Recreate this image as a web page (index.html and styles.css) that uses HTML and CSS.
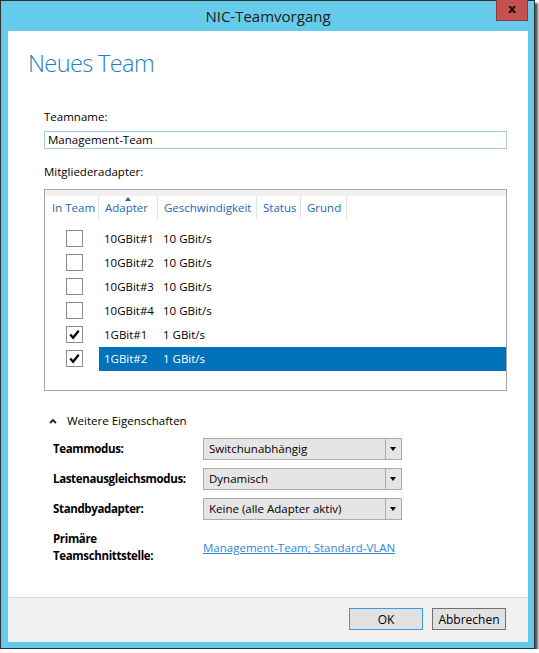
FILE: index.html
```html
<!DOCTYPE html>
<html lang="de">
<head>
    <meta charset="UTF-8">
    <title>NIC-Teamvorgang</title>
    <link rel="stylesheet" href="styles.css">
</head>
<body>
    <div class="window">
        <div class="titlebar">
            <span class="title">NIC-Teamvorgang</span>
            <div class="close">x</div>
        </div>
        <div class="content">
            <div class="main">
                <h1>Neues Team</h1>
                <div class="form">
                    <div class="field-label">Teamname:</div>
                    <div class="text-input">Management-Team</div>

                    <div class="field-label list-label">Mitgliederadapter:</div>
                    <div class="listbox">
                        <div class="list-top"></div>
                        <div class="list-header">
                            <div class="col col-team">In Team</div>
                            <div class="col col-adapter"><span class="sort-arrow"></span>Adapter</div>
                            <div class="col col-speed">Geschwindigkeit</div>
                            <div class="col col-status">Status</div>
                            <div class="col col-reason">Grund</div>
                        </div>
                        <div class="list-rows">
                            <div class="row">
                                <div class="check-cell"><span class="check"></span></div>
                                <div class="data"><span class="cell-adapter">10GBit#1</span><span>10 GBit/s</span></div>
                            </div>
                            <div class="row">
                                <div class="check-cell"><span class="check"></span></div>
                                <div class="data"><span class="cell-adapter">10GBit#2</span><span>10 GBit/s</span></div>
                            </div>
                            <div class="row">
                                <div class="check-cell"><span class="check"></span></div>
                                <div class="data"><span class="cell-adapter">10GBit#3</span><span>10 GBit/s</span></div>
                            </div>
                            <div class="row">
                                <div class="check-cell"><span class="check"></span></div>
                                <div class="data"><span class="cell-adapter">10GBit#4</span><span>10 GBit/s</span></div>
                            </div>
                            <div class="row">
                                <div class="check-cell"><span class="check checked"><svg viewBox="0 0 16 16"><path d="M3.5 8 L6.5 11.5 L12.5 4"/></svg></span></div>
                                <div class="data"><span class="cell-adapter">1GBit#1</span><span>1 GBit/s</span></div>
                            </div>
                            <div class="row selected">
                                <div class="check-cell"><span class="check checked"><svg viewBox="0 0 16 16"><path d="M3.5 8 L6.5 11.5 L12.5 4"/></svg></span></div>
                                <div class="data"><span class="cell-adapter">1GBit#2</span><span>1 GBit/s</span></div>
                            </div>
                        </div>
                    </div>

                    <div class="expander">
                        <svg class="chevron" viewBox="0 0 8 6"><path d="M1 5 L4 2 L7 5"/></svg>
                        <span>Weitere Eigenschaften</span>
                    </div>

                    <div class="props">
                        <div class="prop-label">Teammodus:</div>
                        <div class="select">Switchunabhängig<span class="select-arrow"></span></div>

                        <div class="prop-label">Lastenausgleichsmodus:</div>
                        <div class="select">Dynamisch<span class="select-arrow"></span></div>

                        <div class="prop-label">Standbyadapter:</div>
                        <div class="select">Keine (alle Adapter aktiv)<span class="select-arrow"></span></div>

                        <div class="prop-label last">Primäre<br>Teamschnittstelle:</div>
                        <a class="link last" href="#">Management-Team; Standard-VLAN</a>
                    </div>
                </div>
            </div>
            <div class="footer">
                <button class="btn btn-default">OK</button>
                <button class="btn">Abbrechen</button>
            </div>
        </div>
    </div>
</body>
</html>
```

FILE: styles.css
```css
/* Page */
body {
    margin: 0;
    background: #fff;
    font-family: "Segoe UI", "Open Sans", sans-serif;
    font-size: 11.5px;
    color: #000;
}

/* Window frame */
.window {
    width: 535px;
    height: 649px;
    box-sizing: border-box;
    border: 1px solid #2e2e2e;
    background: #66cbea;
    padding: 0 6px 6px 7px;
    display: flex;
    flex-direction: column;
    box-shadow: 3px 3px 2px rgba(0, 0, 0, 0.65);
}

.titlebar {
    position: relative;
    height: 30px;
    line-height: 30px;
    text-align: center;
    font-size: 15px;
    color: #1b1b1b;
}

.close {
    position: absolute;
    top: -1px;
    right: 0;
    width: 32px;
    height: 21px;
    box-sizing: border-box;
    background: #c75050;
    border: 1px solid #8c3b37;
    border-top: none;
    color: #111;
    font-family: "DejaVu Sans", sans-serif;
    font-weight: bold;
    font-size: 13px;
    line-height: 17px;
}

.content {
    flex: 1;
    display: flex;
    flex-direction: column;
    background: #fff;
}

.main {
    flex: 1;
    padding-right: 21px;
}

h1 {
    margin: 0;
    padding: 16px 0 0 20px;
    font-size: 23.5px;
    font-weight: 300;
    letter-spacing: -0.6px;
    line-height: 33px;
    color: #1d80c3;
}

/* Form */
.form {
    padding-left: 36px;
}

.field-label {
    line-height: 16px;
    margin-top: 29px;
}

.list-label {
    margin-top: 15px;
}

.text-input {
    height: 18px;
    box-sizing: border-box;
    margin-top: 6px;
    border: 1px solid #a8c9e6;
    padding: 0 3px;
    line-height: 16px;
}

/* Adapter list */
.listbox {
    margin-top: 9px;
    height: 202px;
    box-sizing: border-box;
    border: 1px solid #a7a7a7;
}

.list-top {
    height: 6px;
    background: #f0f0f0;
}

.list-header {
    display: flex;
    height: 23px;
    line-height: 23px;
    color: #2467b0;
}

.col {
    position: relative;
    box-sizing: border-box;
    padding-left: 6px;
    border-right: 1px solid #e3e3e3;
    white-space: nowrap;
}

.col-team { width: 54px; padding-left: 7px; }
.col-adapter { width: 59px; }
.col-speed { width: 99px; }
.col-status { width: 44px; }
.col-reason { width: 46px; }

.sort-arrow {
    position: absolute;
    top: 1px;
    left: 26px;
    border-left: 3px solid transparent;
    border-right: 3px solid transparent;
    border-bottom: 4px solid #2467b0;
}

.list-rows {
    margin-top: 8px;
}

.row {
    display: flex;
    height: 24px;
    line-height: 24px;
}

.check-cell {
    width: 54px;
    flex-shrink: 0;
}

.check {
    display: block;
    width: 17px;
    height: 17px;
    box-sizing: border-box;
    margin: 3px 0 0 21px;
    border: 1px solid #8b8b8b;
    background: #fff;
}

.check svg {
    display: block;
    width: 15px;
    height: 15px;
}

.check path {
    fill: none;
    stroke: #000;
    stroke-width: 2.4;
}

.data {
    flex: 1;
    padding-left: 5px;
}

.cell-adapter {
    display: inline-block;
    width: 59px;
}

.row.selected .data {
    background: #0072bc;
    color: #fff;
}

/* Further properties */
.expander {
    margin-top: 22px;
    line-height: 16px;
    display: flex;
    align-items: center;
}

.chevron {
    width: 8px;
    height: 6px;
    margin: 0 10px 0 5px;
}

.chevron path {
    fill: none;
    stroke: #222;
    stroke-width: 1.8;
}

.props {
    margin-top: 9px;
    padding-left: 9px;
    display: grid;
    grid-template-columns: 150px 199px;
    grid-template-rows: 22px 22px 22px auto;
    row-gap: 8px;
    align-items: center;
}

.prop-label {
    font-weight: bold;
    line-height: 16.5px;
    letter-spacing: -0.35px;
    white-space: nowrap;
}

.last {
    margin-top: 3px;
}

.select {
    position: relative;
    height: 22px;
    box-sizing: border-box;
    border: 1px solid #acacac;
    background: #e5e5e5;
    padding-left: 5px;
    line-height: 20px;
}

.select-arrow {
    position: absolute;
    top: 0;
    right: 0;
    width: 15px;
    height: 20px;
    border-left: 1px solid #acacac;
}

.select-arrow::after {
    content: "";
    position: absolute;
    top: 8px;
    left: 4px;
    border-left: 3.5px solid transparent;
    border-right: 3.5px solid transparent;
    border-top: 4px solid #000;
}

.link {
    color: #3384d4;
    white-space: nowrap;
}

/* Footer */
.footer {
    height: 45px;
    box-sizing: border-box;
    border-top: 1px solid #dadada;
    background: #f0f0f0;
    display: flex;
    justify-content: flex-end;
    align-items: flex-start;
    gap: 9px;
    padding: 10px 22px 0 0;
}

.btn {
    width: 74px;
    height: 22px;
    border: 1px solid #707070;
    background: #e1e1e1;
    font-family: inherit;
    font-size: 12px;
    color: #000;
    padding: 0;
}

.btn-default {
    border-color: #3c9be6;
}
```
